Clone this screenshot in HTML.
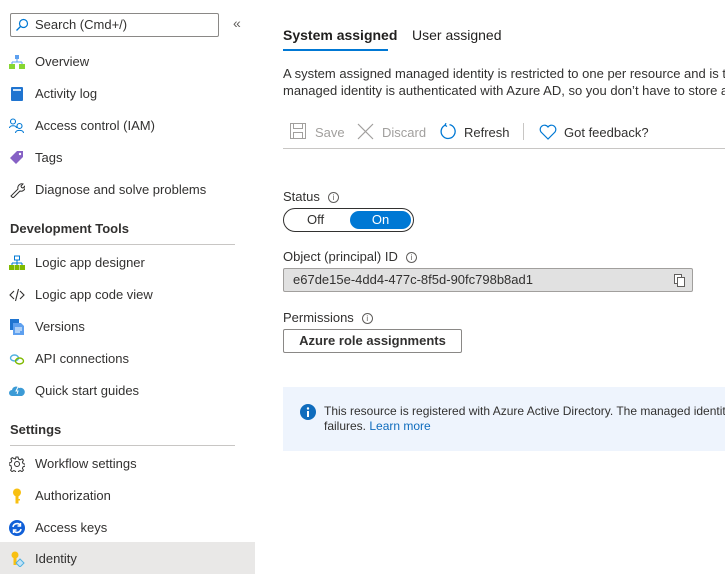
<!DOCTYPE html>
<html><head><meta charset="utf-8"><style>
*{margin:0;padding:0;box-sizing:border-box}
body{width:725px;height:580px;overflow:hidden;background:#fff;font-family:"Liberation Sans",sans-serif;font-size:13px;color:#323130;position:relative}
.a{position:absolute;white-space:nowrap}
.it{position:absolute;left:0;width:255px;height:32px;line-height:33px;padding-left:35px}
.ic{position:absolute;left:9px;top:9px;width:16px;height:16px}
.hd{position:absolute;left:10px;font-weight:bold}
.ln{position:absolute;left:10px;width:225px;height:1px;background:#c8c6c4}
.info{display:inline-block;width:11px;height:11px;border:1px solid #605e5c;border-radius:50%;font-size:8px;line-height:9px;text-align:center;color:#605e5c;vertical-align:1px;margin-left:8px}
</style></head><body>
<div class="a" style="left:10px;top:13px;width:209px;height:24px;border:1px solid #8a8886;border-radius:2px"></div>
<svg class="a" style="left:15px;top:18px" width="14" height="14"><circle cx="8.5" cy="5.5" r="4" fill="none" stroke="#0078d4" stroke-width="1.2"/><line x1="5.5" y1="8.5" x2="1.5" y2="12.5" stroke="#0078d4" stroke-width="1.3"/></svg>
<div class="a" style="left:35px;top:17px;line-height:16px;color:#323130">Search (Cmd+/)</div>
<div class="a" style="left:233px;top:15px;color:#605e5c;font-size:14px">«</div>

<div class="it" style="top:45px"><svg class="ic" viewBox="0 0 16 16"><rect x="6" y="1" width="4" height="4" fill="#5ea0ef"/><path d="M8 5v3M3 8h10M3 8v2M13 8v2" stroke="#5ea0ef" fill="none"/><rect x="0" y="10" width="6" height="5" fill="#86d633"/><rect x="10" y="10" width="6" height="5" fill="#86d633"/></svg>Overview</div>
<div class="it" style="top:77px"><svg class="ic" viewBox="0 0 16 16"><rect x="2" y="1" width="12" height="14" rx="1" fill="#1f74d0"/><rect x="4" y="3" width="8" height="2" fill="#cfe4fa"/></svg>Activity log</div>
<div class="it" style="top:109px"><svg class="ic" viewBox="0 0 16 16" fill="none" stroke="#0078d4" stroke-width="1.1"><circle cx="4" cy="3.5" r="2.5"/><path d="M0.5 10c0-3 7-3 7 0"/><circle cx="10.5" cy="8" r="2.5"/><path d="M6.5 15c0-3.5 8-3.5 8 0"/></svg>Access control (IAM)</div>
<div class="it" style="top:141px"><svg class="ic" viewBox="0 0 16 16"><path d="M1 8l7-7h6v6l-7 7z" fill="#8661c5"/><circle cx="11" cy="4" r="1.2" fill="#fff"/></svg>Tags</div>
<div class="it" style="top:173px"><svg class="ic" viewBox="0 0 16 16" fill="none" stroke="#323130" stroke-width="1"><path d="M2 14l7-7c-1-3 2-6 5-5l-2 2 .5 1.5L14 6l2-2c1 3-2 6-5 5l-7 7z"/></svg>Diagnose and solve problems</div>
<div class="hd" style="top:221px">Development Tools</div>
<div class="ln" style="top:244px"></div>
<div class="it" style="top:246px"><svg class="ic" viewBox="0 0 16 16"><rect x="5.5" y="1" width="5" height="4" fill="none" stroke="#0078d4"/><path d="M8 5v3M3 8h10M3 8v2M13 8v2M8 8v2" stroke="#0078d4" fill="none"/><rect x="0" y="10" width="5" height="5" fill="#7fba00"/><rect x="5.5" y="10" width="5" height="5" fill="#7fba00"/><rect x="11" y="10" width="5" height="5" fill="#7fba00"/></svg>Logic app designer</div>
<div class="it" style="top:278px"><svg class="ic" viewBox="0 0 16 16" fill="none" stroke="#323130" stroke-width="1.1"><path d="M5 4L1 8l4 4M11 4l4 4-4 4M9.5 2l-3 12"/></svg>Logic app code view</div>
<div class="it" style="top:310px"><svg class="ic" viewBox="0 0 16 16"><rect x="1" y="0" width="9" height="11" fill="#1f74d0"/><path d="M4 4h8l3 3v9H4z" fill="#5ea0ef"/><path d="M6 9h7M6 11h7M6 13h5" stroke="#fff"/></svg>Versions</div>
<div class="it" style="top:342px"><svg class="ic" viewBox="0 0 16 16" fill="none" stroke-width="1.4"><ellipse cx="5.5" cy="7" rx="4" ry="3" stroke="#50b0e0"/><ellipse cx="10.5" cy="10" rx="4" ry="3" stroke="#7fba00"/></svg>API connections</div>
<div class="it" style="top:374px"><svg class="ic" viewBox="0 0 16 16"><path d="M3 13a3 3 0 010-6 4 4 0 017-2 3.5 3.5 0 013 8z" fill="#3c9bd6"/><path d="M9 4l-2 4h2l-1 3" stroke="#fff" fill="none"/></svg>Quick start guides</div>
<div class="hd" style="top:422px">Settings</div>
<div class="ln" style="top:445px"></div>
<div class="it" style="top:447px"><svg class="ic" viewBox="0 0 16 16" fill="none" stroke="#323130" stroke-width="1"><circle cx="8" cy="8" r="2.5"/><path d="M7 1h2l.5 2 1.6.8 1.9-1 1.4 1.4-1 1.9.8 1.6 2 .5v2l-2 .5-.8 1.6 1 1.9-1.4 1.4-1.9-1-1.6.8-.5 2H7l-.5-2-1.6-.8-1.9 1-1.4-1.4 1-1.9L1.900 9.5 0 9V7l2-.5.8-1.6-1-1.9 1.4-1.4 1.9 1L6.5 3z"/></svg>Workflow settings</div>
<div class="it" style="top:479px"><svg class="ic" viewBox="0 0 16 16"><circle cx="8" cy="4.5" r="4" fill="#f8c012"/><rect x="6.5" y="7" width="3" height="8.5" fill="#f8c012"/><rect x="9" y="11" width="2" height="1.5" fill="#f8c012"/></svg>Authorization</div>
<div class="it" style="top:511px"><svg class="ic" viewBox="0 0 16 16"><circle cx="8" cy="8" r="8" fill="#1160d8"/><path d="M4 7a4 4 0 017-2M12 9a4 4 0 01-7 2" stroke="#fff" stroke-width="1.6" fill="none"/><path d="M11.5 3v3h-3M4.5 13v-3h3" stroke="#fff" stroke-width="1.4" fill="none"/></svg>Access keys</div>
<div class="it" style="top:542px;background:#e9e8e7"><svg class="ic" viewBox="0 0 16 16"><circle cx="6" cy="4" r="3.5" fill="#f8c012"/><rect x="4.5" y="6" width="3" height="8" fill="#f8c012"/><path d="M11 8l4 4-4 4-4-4z" fill="#c3e3f7" stroke="#50b0e0"/></svg>Identity</div>

<div class="a" style="left:283px;top:27px;font-size:14px;font-weight:bold;color:#201f1e">System assigned</div>
<div class="a" style="left:283px;top:49px;width:105px;height:2px;background:#0078d4"></div>
<div class="a" style="left:412px;top:27px;font-size:14px;color:#201f1e">User assigned</div>
<div class="a" style="left:283px;top:65px;line-height:17px">A system assigned managed identity is restricted to one per resource and is ti<br>managed identity is authenticated with Azure AD, so you don’t have to store a</div>

<svg class="a" style="left:290px;top:123px" width="16" height="16" fill="none" stroke="#a19f9d"><rect x="0.5" y="0.5" width="15" height="15"/><rect x="3.5" y="0.5" width="9" height="5"/><rect x="3.5" y="9.5" width="9" height="6"/></svg>
<div class="a" style="left:315px;top:125px;color:#a19f9d">Save</div>
<svg class="a" style="left:357px;top:123px" width="17" height="17" stroke="#a19f9d" stroke-width="1.2"><path d="M1 1l15 15M16 1L1 16"/></svg>
<div class="a" style="left:382px;top:125px;color:#a19f9d">Discard</div>
<svg class="a" style="left:439px;top:123px" width="17" height="17" fill="none" stroke="#0078d4" stroke-width="1.3"><path d="M6 2.2A7 7 0 1 0 10.5 1.6"/><path d="M6 2.2l1-2M6 2.2L8 3.5"/></svg>
<div class="a" style="left:464px;top:125px;color:#323130">Refresh</div>
<div class="a" style="left:523px;top:123px;width:1px;height:17px;background:#c8c6c4"></div>
<svg class="a" style="left:539px;top:124px" width="18" height="16" fill="none" stroke="#0078d4" stroke-width="1.2"><path d="M9 15L2 8A4 4 0 0 1 9 3 4 4 0 0 1 16 8z"/></svg>
<div class="a" style="left:564px;top:125px;color:#323130">Got feedback?</div>
<div class="a" style="left:283px;top:148px;width:442px;height:1px;background:#c8c6c4"></div>

<div class="a" style="left:283px;top:189px">Status<span class="info">i</span></div>
<div class="a" style="left:283px;top:208px;width:131px;height:24px;border:1px solid #323130;border-radius:12px"></div>
<div class="a" style="left:307px;top:212px">Off</div>
<div class="a" style="left:350px;top:211px;width:61px;height:18px;background:#0078d4;border-radius:9px;color:#fff;text-align:center;line-height:18px">On</div>

<div class="a" style="left:283px;top:249px">Object (principal) ID<span class="info">i</span></div>
<div class="a" style="left:283px;top:268px;width:410px;height:24px;background:#e1e1e1;border:1px solid #a19f9d;border-radius:2px;line-height:22px;padding-left:9px;color:#323130">e67de15e-4dd4-477c-8f5d-90fc798b8ad1</div>
<svg class="a" style="left:674px;top:274px" width="12" height="13" fill="#fff" stroke="#605e5c"><rect x="0.5" y="0.5" width="7" height="9"/><rect x="3.5" y="3.5" width="7" height="9"/></svg>

<div class="a" style="left:283px;top:310px">Permissions<span class="info">i</span></div>
<div class="a" style="left:283px;top:329px;width:179px;height:24px;border:1px solid #8a8886;border-radius:2px;text-align:center;line-height:22px;font-weight:bold;color:#323130">Azure role assignments</div>

<div class="a" style="left:283px;top:387px;width:442px;height:64px;background:#eef4fd"></div>
<svg class="a" style="left:300px;top:404px" width="16" height="16"><circle cx="8" cy="8" r="8" fill="#0f6cbd"/><rect x="7" y="7" width="2" height="6" fill="#fff"/><circle cx="8" cy="4.5" r="1.2" fill="#fff"/></svg>
<div class="a" style="left:324px;top:404px;font-size:12px;line-height:15px;color:#323130">This resource is registered with Azure Active Directory. The managed identity<br>failures. <span style="color:#0f6cbd">Learn more</span></div>
</body></html>
